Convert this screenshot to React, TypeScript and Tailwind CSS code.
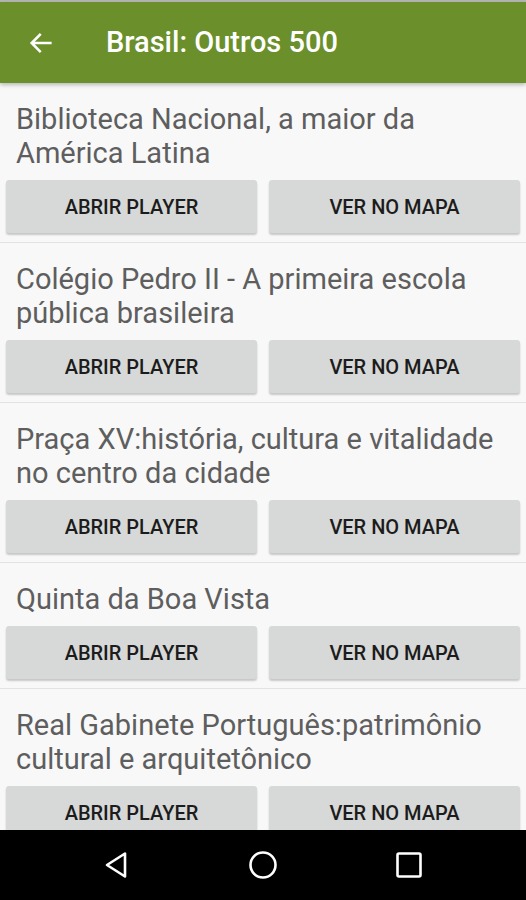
const items = [
  "Biblioteca Nacional, a maior da América Latina",
  "Colégio Pedro II - A primeira escola pública brasileira",
  "Praça XV:história, cultura e vitalidade no centro da cidade",
  "Quinta da Boa Vista",
  "Real Gabinete Português:patrimônio cultural e arquitetônico",
];

function ListItem({ title }: { title: string }) {
  return (
    <div className="border-b border-[#e2e2e2]">
      <p className="px-4 pr-5 pt-[19px] text-[29px] leading-[34px] text-[#5e5e5e]">{title}</p>
      <div className="mt-[10px] mb-[9px] flex gap-3 px-[6px]">
        <button className="h-[53px] flex-1 rounded-[3px] bg-[#d7d8d8] text-[20px] font-medium text-[#1c1c1c] shadow-[0_2px_2px_rgba(0,0,0,0.2)]">
          ABRIR PLAYER
        </button>
        <button className="h-[53px] flex-1 rounded-[3px] bg-[#d7d8d8] text-[20px] font-medium text-[#1c1c1c] shadow-[0_2px_2px_rgba(0,0,0,0.2)]">
          VER NO MAPA
        </button>
      </div>
    </div>
  );
}

export default function App() {
  return (
    <div className="flex h-[900px] w-[526px] flex-col overflow-hidden bg-[#f8f8f8] font-['Roboto',sans-serif]">
      <div className="h-[2px] bg-[#b5b5b5]" />
      <header className="z-10 flex h-[81px] shrink-0 items-center bg-[#6a8f2b] shadow-[0_2px_4px_rgba(0,0,0,0.25)]">
        <svg className="ml-[27px]" width="28" height="28" viewBox="0 0 24 24" fill="none" stroke="white" strokeWidth="2.2" strokeLinecap="square">
          <path d="M20 12H5M11 5l-7 7 7 7" />
        </svg>
        <h1 className="ml-[51px] text-[29px] font-medium text-white">Brasil: Outros 500</h1>
      </header>
      <main className="flex-1 overflow-hidden">
        {items.map((t) => (
          <ListItem key={t} title={t} />
        ))}
      </main>
      <nav className="flex h-[70px] shrink-0 items-center justify-center gap-[118px] bg-black">
        <svg width="28" height="28" viewBox="0 0 28 28" fill="none" stroke="white" strokeWidth="2.6" strokeLinejoin="round">
          <path d="M22 2.5v23L4 14z" />
        </svg>
        <svg width="28" height="28" viewBox="0 0 28 28" fill="none" stroke="white" strokeWidth="2.6">
          <circle cx="14" cy="14" r="12.5" />
        </svg>
        <svg width="28" height="28" viewBox="0 0 28 28" fill="none" stroke="white" strokeWidth="2.6">
          <rect x="2.5" y="2.5" width="23" height="23" rx="1.5" />
        </svg>
      </nav>
    </div>
  );
}
